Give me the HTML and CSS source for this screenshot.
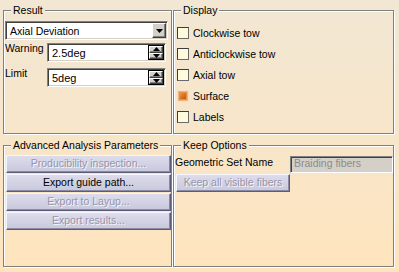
FILE: index.html
```html
<html>
    <head>
        <title>Braiding analysis</title>
        <meta charset = "utf-8">
        <link rel="stylesheet" href="styles.css">
    </head>
    <body>
        <div class = "panel">
            <fieldset class = "frame">
                <legend>Result</legend>
                <div class = "result-body">
                    <div class = "combo">
                        <span class = "combo-text">Axial Deviation</span>
                        <span class = "drop">
                            <svg width="7" height="4" viewBox="0 0 7 4"><polygon points="0,0 7,0 3.5,4" fill="#000"/></svg>
                        </span>
                    </div>
                    <div class = "field-row">
                        <span class = "label">Warning</span>
                        <div class = "spin">
                            <span class = "spin-text">2.5deg</span>
                            <span class = "arrows">
                                <span class = "arrow"><svg width="7" height="4" viewBox="0 0 7 4"><polygon points="0,4 7,4 3.5,0" fill="#000"/></svg></span>
                                <span class = "arrow"><svg width="7" height="4" viewBox="0 0 7 4"><polygon points="0,0 7,0 3.5,4" fill="#000"/></svg></span>
                            </span>
                        </div>
                    </div>
                    <div class = "field-row limit">
                        <span class = "label">Limit</span>
                        <div class = "spin">
                            <span class = "spin-text">5deg</span>
                            <span class = "arrows">
                                <span class = "arrow"><svg width="7" height="4" viewBox="0 0 7 4"><polygon points="0,4 7,4 3.5,0" fill="#000"/></svg></span>
                                <span class = "arrow"><svg width="7" height="4" viewBox="0 0 7 4"><polygon points="0,0 7,0 3.5,4" fill="#000"/></svg></span>
                            </span>
                        </div>
                    </div>
                </div>
            </fieldset>

            <fieldset class = "frame">
                <legend>Display</legend>
                <div class = "display-body">
                    <div class = "check"><span class = "box"></span>Clockwise tow</div>
                    <div class = "check"><span class = "box"></span>Anticlockwise tow</div>
                    <div class = "check"><span class = "box"></span>Axial tow</div>
                    <div class = "check"><span class = "box checked"></span>Surface</div>
                    <div class = "check"><span class = "box"></span>Labels</div>
                </div>
            </fieldset>

            <fieldset class = "frame">
                <legend>Advanced Analysis Parameters</legend>
                <div class = "advanced-body">
                    <div class = "btn disabled">Producibility inspection...</div>
                    <div class = "btn">Export guide path...</div>
                    <div class = "btn disabled">Export to Layup...</div>
                    <div class = "btn disabled">Export results...</div>
                </div>
            </fieldset>

            <fieldset class = "frame">
                <legend>Keep Options</legend>
                <div class = "keep-body">
                    <div class = "keep-row">
                        <span class = "keep-label">Geometric Set Name</span>
                        <span class = "name-field">Braiding fibers</span>
                    </div>
                    <div class = "btn disabled keep-btn">Keep all visible fibers</div>
                </div>
            </fieldset>
        </div>
    </body>
</html>
```

FILE: styles.css
```css
body
{
    margin: 0;
    width: 399px;
    height: 272px;
    background: linear-gradient(#f1e7d4, #fee4bd) fixed;
    font-family: "Liberation Sans", Arial, sans-serif;
    font-size: 10.5px;
    color: #000;
    overflow: hidden;
}
.panel
{
    display: grid;
    grid-template-columns: 169px 221px;
    grid-template-rows: 130px 128px;
    column-gap: 1px;
    row-gap: 5px;
    padding: 4px 0 0 3px;
}
.frame
{
    margin: 0;
    padding: 0;
    min-width: 0;
    border: 1px solid #808080;
    box-shadow: inset 1px 1px #fff, 1px 1px #fff;
}
.frame legend
{
    margin-left: 7px;
    padding: 0 2px;
    line-height: 13px;
    background: linear-gradient(#f1e7d4, #fee4bd) fixed;
}

/* result */
.result-body
{
    padding: 4px 0 0 1px;
}
.combo
{
    display: flex;
    align-items: center;
    box-sizing: border-box;
    width: 163px;
    height: 19px;
    background: #fff;
    border: 1px solid;
    border-color: #808080 #fff #fff #808080;
    box-shadow: inset 1px 1px #404040, inset -1px -1px #d4d0c8;
    padding: 1px 1px 1px 4px;
}
.combo-text
{
    flex: 1;
}
.drop, .arrow
{
    display: flex;
    align-items: center;
    justify-content: center;
    box-sizing: border-box;
    background: #d4d0c8;
    border: 1px solid;
    border-color: #fff #404040 #404040 #fff;
    box-shadow: inset -1px -1px #808080;
}
.drop
{
    width: 14px;
    height: 15px;
}
.field-row
{
    display: flex;
    margin-top: 3px;
}
.field-row.limit
{
    margin-top: 6px;
}
.label
{
    width: 42px;
    line-height: 11px;
}
.spin
{
    display: flex;
    align-items: center;
    box-sizing: border-box;
    width: 119px;
    height: 19px;
    background: #fff;
    border: 1px solid;
    border-color: #808080 #fff #fff #808080;
    box-shadow: inset 1px 1px #404040, inset -1px -1px #d4d0c8;
    padding: 1px 1px 1px 4px;
}
.spin-text
{
    flex: 1;
    font-size: 11px;
}
.arrows
{
    display: flex;
    flex-direction: column;
    box-sizing: border-box;
    width: 16px;
    height: 15px;
    border: 1px solid #000;
}
.arrow
{
    flex: 1;
}

/* display */
.display-body
{
    padding: 5px 0 0 3px;
}
.check
{
    display: flex;
    align-items: center;
    height: 21px;
}
.box
{
    box-sizing: border-box;
    width: 12px;
    height: 12px;
    margin-right: 4px;
    background: #fffbdc;
    border: 1px solid;
    border-color: #3c3c3c #6a6a6a #6a6a6a #3c3c3c;
}
.box.checked
{
    border-color: #f8e0c4;
    background: linear-gradient(135deg, #f6b070, #d06818 60%, #b85210);
    box-shadow: inset 0 0 0 1px #f0b478, inset 0 0 0 2px #e89048;
}

/* buttons */
.btn
{
    box-sizing: border-box;
    height: 18px;
    line-height: 15px;
    text-align: center;
    background: linear-gradient(#dcdcec, #c8c8dc);
    border: 1px solid;
    border-color: #f6f6fc #5c5c7a #5c5c7a #f6f6fc;
    box-shadow: inset 0 -1px #8a8aa6, inset -1px 0 #8a8aa6;
}
.btn.disabled
{
    color: #9695ab;
    text-shadow: 1px 1px #f6f6fc;
}
.advanced-body
{
    display: flex;
    flex-direction: column;
    gap: 1px;
    padding: 3px 0 0 2px;
}

/* keep options */
.keep-body
{
    padding: 4px 0 0 1px;
}
.keep-row
{
    display: flex;
}
.keep-label
{
    flex: 1;
    line-height: 13px;
}
.name-field
{
    box-sizing: border-box;
    width: 103px;
    height: 17px;
    line-height: 13px;
    padding-left: 3px;
    color: #8c8c8c;
    background: #d4d0c8;
    border: 1px solid;
    border-color: #808080 #fff #fff #808080;
    box-shadow: inset 1px 1px #404040;
}
.keep-btn
{
    width: 114px;
    margin: 1px 0 0 1px;
}
```
